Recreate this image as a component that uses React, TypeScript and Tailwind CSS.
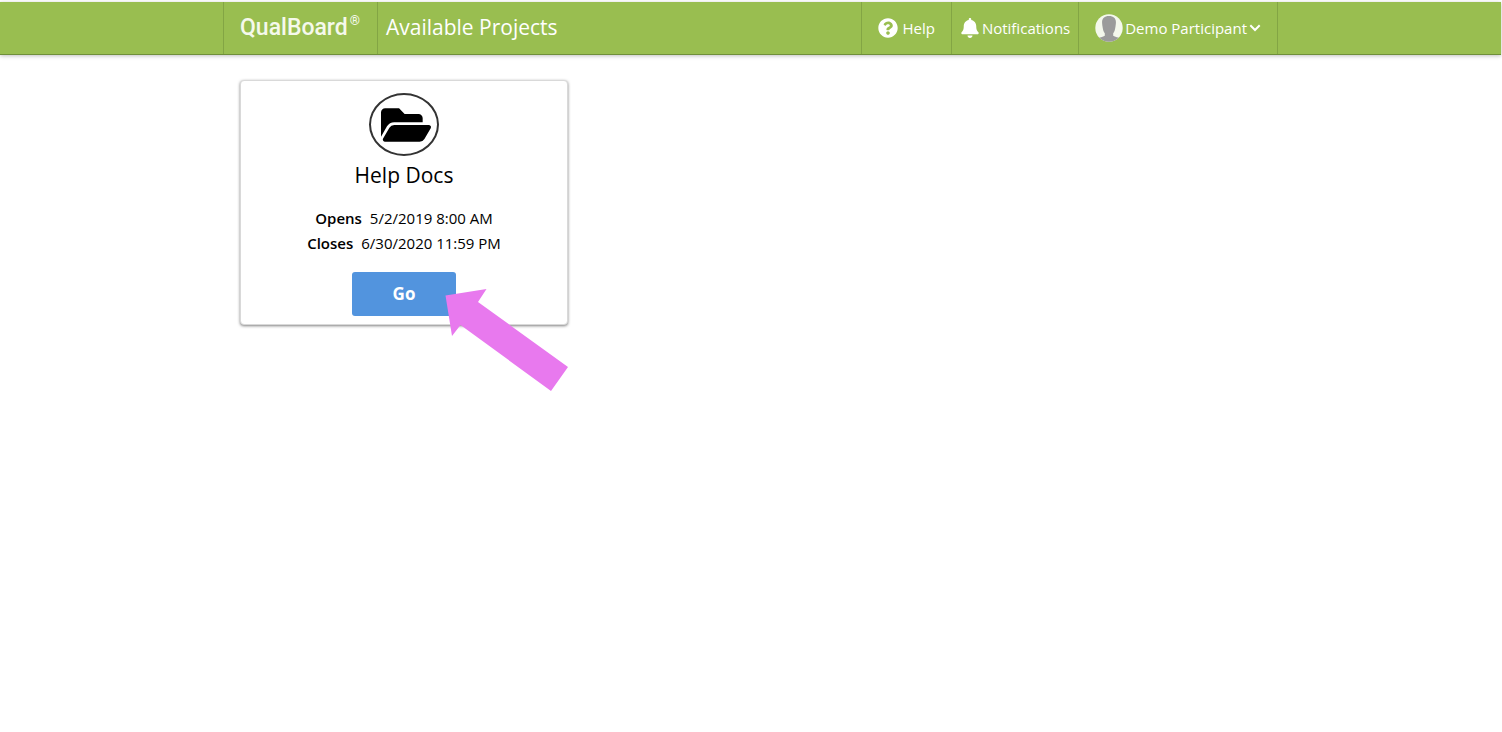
import React from "react";
import { FaBell, FaFolderOpen, FaQuestionCircle } from "react-icons/fa";

function Avatar() {
  return (
    <svg viewBox="0 0 28 28" className="size-7" aria-hidden="true">
      <defs>
        <clipPath id="avatar-clip">
          <circle cx="14" cy="14" r="13.7" />
        </clipPath>
      </defs>
      <circle cx="14" cy="14" r="13.7" fill="#f4f8ec" />
      <g clipPath="url(#avatar-clip)" fill="#9b9b9b">
        <path d="M14 2c4.800 0 7.200 2.600 6.900 7-.1 1.500-.2 2.300-.4 3.400-.4 3-1 5.200-2.300 6.900v2.500c1.600 1.300 5.600 1.500 7.800 3V29H2v-4.200c2.200-1.500 6.200-1.700 7.800-3v-2.500c-1.300-1.700-1.900-3.900-2.300-6.900-.2-1.100-.3-1.900-.4-3.400C6.800 4.600 9.200 2 14 2z" />
      </g>
    </svg>
  );
}

function Header() {
  return (
    <header className="border-b border-[#6f8f3a] bg-[#99be50] text-white shadow-[0_1px_4px_rgba(0,0,0,0.25)]">
      <div className="mx-auto flex h-13 max-w-[1055px] items-stretch border-x border-[#83a544]">
        <a
          href="#home"
          className="flex w-[154px] items-center border-r border-[#83a544] pb-0.5 pl-4 font-['Roboto',sans-serif] text-[23px] leading-none font-medium text-[#f5f9ec]"
        >
          QualBoard<sup className="ml-0.5 text-[13px] leading-none">®</sup>
        </a>
        <h1 className="flex items-center pl-2 text-[21px]">Available Projects</h1>
        <nav className="ml-auto flex items-stretch text-[15px]">
          <a href="#help" className="flex items-center gap-1 border-l border-[#83a544] px-4">
            <FaQuestionCircle className="size-5" aria-hidden="true" />
            Help
          </a>
          <a href="#notifications" className="flex items-center gap-0.5 border-l border-[#83a544] px-2">
            <FaBell className="size-5" aria-hidden="true" />
            Notifications
          </a>
          <button type="button" className="flex items-center gap-0.5 border-l border-[#83a544] px-4">
            <Avatar />
            Demo Participant
            <svg viewBox="0 0 12 8" className="h-2 w-3" fill="none" stroke="currentColor" strokeWidth="2" aria-hidden="true">
              <path d="M1.300 1.300 6 6l4.700-4.700" />
            </svg>
          </button>
        </nav>
      </div>
    </header>
  );
}

function ProjectCard() {
  return (
    <article className="relative flex w-[328px] flex-col items-center rounded border border-[#d9d9d9] bg-white px-4 pt-3 pb-2 text-black shadow-[0_1px_3px_rgba(0,0,0,0.5)]">
      <div className="flex h-[63px] w-[70px] items-center justify-center rounded-[50%] border-2 border-[#333] pl-1">
        <FaFolderOpen className="size-[50px]" aria-hidden="true" />
      </div>
      <h2 className="text-[21px] leading-[38px]">Help Docs</h2>
      <dl className="mt-3 text-center text-[15px] leading-[25px]">
        <div className="flex justify-center gap-2">
          <dt className="font-semibold">Opens</dt>
          <dd>5/2/2019 8:00 AM</dd>
        </div>
        <div className="flex justify-center gap-2">
          <dt className="font-semibold">Closes</dt>
          <dd>6/30/2020 11:59 PM</dd>
        </div>
      </dl>
      <button type="button" className="mt-4 h-11 w-[104px] rounded-[3px] bg-[#5294de] text-[17px] font-bold text-white">
        Go
      </button>
      <svg
        viewBox="0 0 124 104"
        className="pointer-events-none absolute top-[208px] left-[204px] h-[104px] w-[124px]"
        aria-hidden="true"
      >
        <path d="M.5 6.500 41.500 0 33 13l90 65-17 24L15.500 36 7 47z" fill="#e879ee" />
      </svg>
    </article>
  );
}

export default function App() {
  return (
    <div className="min-h-screen bg-white pt-0.5 pr-px font-['Open_Sans',sans-serif]">
      <Header />
      <main className="mx-auto max-w-[1055px] px-[17px] pt-[25px]">
        <ProjectCard />
      </main>
    </div>
  );
}
